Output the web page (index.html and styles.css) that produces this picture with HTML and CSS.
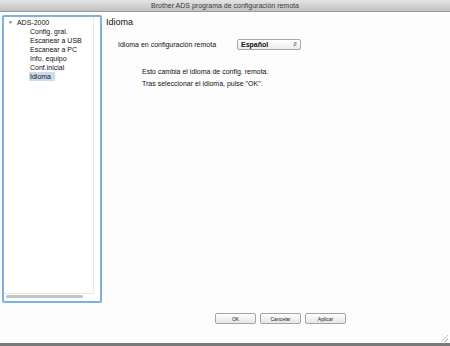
FILE: index.html
```html
<!DOCTYPE html>
<html lang="es">
<head>
    <meta charset="UTF-8">
    <title>Brother ADS programa de configuración remota</title>
    <link rel="stylesheet" href="styles.css">
</head>
<body>
    <div class="window">
        <div class="titlebar">Brother ADS programa de configuración remota</div>

        <div class="content">
            <div class="sidebar">
                <div class="tree">
                    <div class="tree-root"><span class="arrow">&#9660;</span>ADS-2000</div>
                    <div class="tree-item">Config. gral.</div>
                    <div class="tree-item">Escanear a USB</div>
                    <div class="tree-item">Escanear a PC</div>
                    <div class="tree-item">Info. equipo</div>
                    <div class="tree-item">Conf.inicial</div>
                    <div class="tree-item selected">Idioma</div>
                </div>
                <div class="hscroll"><div class="thumb"></div></div>
            </div>

            <div class="main">
                <h1>Idioma</h1>
                <div class="setting">
                    <label>Idioma en configuración remota</label>
                    <div class="select">Español<span class="updown">&#8693;</span></div>
                </div>
                <div class="note">
                    <p>Esto cambia el idioma de config. remota.</p>
                    <p>Tras seleccionar el idioma, pulse "OK".</p>
                </div>
            </div>
        </div>

        <div class="footer">
            <button>OK</button>
            <button>Cancelar</button>
            <button>Aplicar</button>
            <div class="grip"></div>
        </div>
        <div class="bottom-edge"></div>
    </div>
</body>
</html>
```

FILE: styles.css
```css
body {
    margin: 0;
    font-family: "Liberation Sans", Arial, sans-serif;
    font-size: 7px;
    color: #111;
    background: #fcfdfc;
}
.window {
    width: 450px;
    height: 346px;
    display: flex;
    flex-direction: column;
    overflow: hidden;
}
.titlebar {
    height: 11px;
    line-height: 11px;
    text-align: center;
    color: #3a3a3a;
    font-size: 7px;
    background: linear-gradient(#e4e4e4, #c2c2c2);
    border-bottom: 1px solid #9a9a9a;
}
.content {
    flex: 1;
    display: flex;
    padding: 3px 0 0 2px;
}
.sidebar {
    width: 96px;
    height: 284px;
    border: 2px solid #7db2df;
    border-radius: 2px;
    background: #fff;
    display: flex;
    flex-direction: column;
}
.tree {
    flex: 1;
    width: 89px;
    padding-top: 1px;
    border-right: 1px solid #e8e8e8;
    border-bottom: 1px solid #e8e8e8;
}
.tree-root {
    height: 9px;
    line-height: 9px;
    padding-left: 4px;
}
.arrow {
    font-size: 5px;
    color: #777;
    margin-right: 4px;
    vertical-align: 1px;
}
.tree-item {
    height: 9px;
    line-height: 9px;
    margin-left: 25px;
    padding-left: 1px;
    width: fit-content;
    padding-right: 4px;
}
.tree-item.selected {
    background: #cadcf2;
}
.hscroll {
    height: 6px;
    padding: 1px 0 0 2px;
}
.thumb {
    width: 77px;
    height: 3px;
    border-radius: 2px;
    background: #c4c4c4;
}
.main {
    flex: 1;
    padding-left: 4px;
}
h1 {
    margin: 2px 0 0;
    font-size: 9px;
    font-weight: normal;
}
.setting {
    display: flex;
    align-items: center;
    margin: 12px 0 0 12px;
}
.setting label {
    width: 119px;
}
.select {
    width: 56px;
    height: 9px;
    line-height: 9px;
    padding: 0 3px;
    border: 1px solid #a8a8a8;
    border-radius: 2px;
    background: linear-gradient(#ffffff, #ececec);
    display: flex;
    justify-content: space-between;
    font-weight: bold;
}
.updown {
    font-size: 5px;
    font-weight: normal;
    color: #555;
}
.note {
    margin: 16px 0 0 36px;
}
.note p {
    margin: 0;
    line-height: 12px;
}
.footer {
    height: 40px;
    display: flex;
    gap: 4px;
    padding: 10px 0 0 215px;
    box-sizing: border-box;
    position: relative;
}
button {
    width: 41px;
    height: 11px;
    padding: 0;
    font-family: inherit;
    font-size: 5px;
    color: #222;
    border: 1px solid #a5a5a5;
    border-radius: 2px;
    background: linear-gradient(#ffffff, #e6e6e6);
}
.grip {
    position: absolute;
    right: 2px;
    bottom: 1px;
    width: 7px;
    height: 7px;
    background: linear-gradient(135deg, transparent 45%, #c8c8c8 45%, #c8c8c8 55%, transparent 55%, transparent 70%, #c8c8c8 70%, #c8c8c8 80%, transparent 80%);
}
.bottom-edge {
    height: 3px;
    background: #7a7a7a;
}
```
